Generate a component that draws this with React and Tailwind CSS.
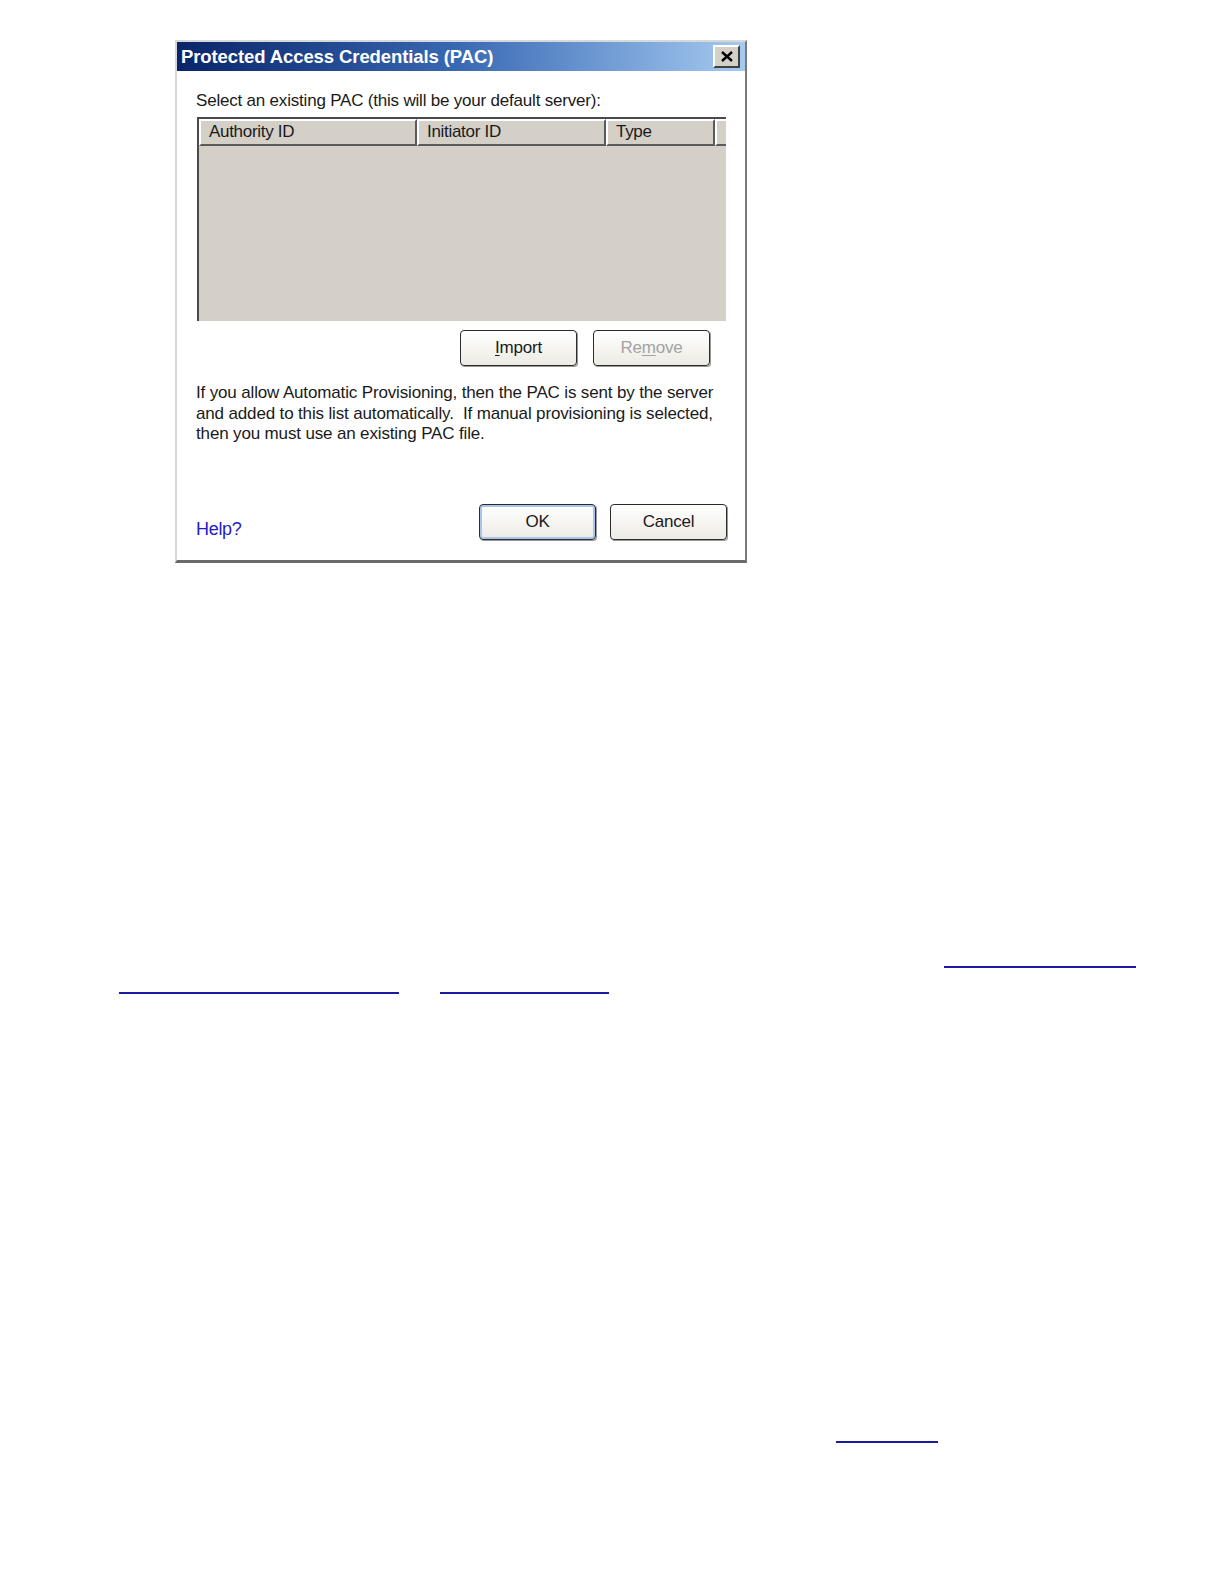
import React from 'react';

function WinButton({ children, disabled, isDefault, className = '' }) {
  return (
    <button
      type="button"
      className={`h-[36px] w-[117px] rounded-[4px] border border-[#2b2b2b] bg-gradient-to-b from-white to-[#ecebe4] text-[17px] tracking-[-0.2px] shadow-[1px_1px_0_#9a9a9a] flex items-center justify-center ${
        isDefault ? 'ring-2 ring-inset ring-[#a9c4ee]' : ''
      } ${disabled ? 'text-[#a3a3a3]' : 'text-[#1a1a1a]'} ${className}`}
    >
      {children}
    </button>
  );
}

function HeaderCell({ children, width }) {
  return (
    <div
      className={`${width} h-[27px] shrink-0 bg-[#d4d0c8] border-t-2 border-l-2 border-white border-r-2 border-r-[#5a5a5a] border-b-2 border-b-[#5a5a5a] pl-[8px] text-[17px] tracking-[-0.3px] leading-[22px] text-[#1a1a1a]`}
    >
      {children}
    </div>
  );
}

function PacDialog() {
  return (
    <div className="w-[572px] h-[523px] bg-white border-l-2 border-t-2 border-[#d8d8d8] border-r-2 border-r-[#7a7a7a] border-b-[3px] border-b-[#6a6a6a] flex flex-col">
      {/* Title bar */}
      <div className="h-[29px] bg-gradient-to-r from-[#0a246a] via-[#3a6ab4] to-[#a6caf0] flex items-center justify-between pl-[4px] pr-[5px]">
        <span className="text-white font-bold text-[18.5px] tracking-[-0.1px]">
          Protected Access Credentials (PAC)
        </span>
        <div className="w-[27px] h-[23px] bg-[#d4d0c8] border-t-2 border-l-2 border-white border-r-2 border-r-[#404040] border-b-2 border-b-[#404040] flex items-center justify-center">
          <svg width="12" height="11" viewBox="0 0 12 11">
            <path d="M1 1 L11 10 M11 1 L1 10" stroke="#000" strokeWidth="2.4" />
          </svg>
        </div>
      </div>

      {/* Body */}
      <div className="flex-1 flex flex-col pl-[19px] pr-[19px]">
        <p className="mt-[19px] text-[17px] leading-[22px] tracking-[-0.2px] text-[#1a1a1a] whitespace-nowrap">
          Select an existing PAC (this will be your default server):
        </p>

        <div className="mt-[5px] ml-[1px] w-[529px] h-[204px] bg-[#d4d0c8] border-l-2 border-t-2 border-[#4a4a4a]">
          <div className="flex">
            <HeaderCell width="w-[218px]">Authority ID</HeaderCell>
            <HeaderCell width="w-[189px]">Initiator ID</HeaderCell>
            <HeaderCell width="w-[109px]">Type</HeaderCell>
            <div className="flex-1 h-[27px] bg-[#d4d0c8] border-t-2 border-l-2 border-white border-b-2 border-b-[#5a5a5a]" />
          </div>
        </div>

        <div className="mt-[9px] flex gap-[16px] pl-[264px]">
          <WinButton>
            <span>
              <span className="underline underline-offset-2">I</span>mport
            </span>
          </WinButton>
          <WinButton disabled>
            <span>
              Re<span className="underline underline-offset-2">m</span>ove
            </span>
          </WinButton>
        </div>

        <p className="mt-[17px] text-[17px] leading-[20.5px] tracking-[-0.15px] text-[#1a1a1a] whitespace-pre">
          {'If you allow Automatic Provisioning, then the PAC is sent by the server\nand added to this list automatically.  If manual provisioning is selected,\nthen you must use an existing PAC file.'}
        </p>

        <div className="mt-auto mb-[20px] flex items-end justify-between">
          <span className="text-[18px] tracking-[-0.3px] text-[#1d1dc8] leading-[22px]">Help?</span>
          <div className="flex gap-[14px] mr-[-1px]">
            <WinButton isDefault>OK</WinButton>
            <WinButton>Cancel</WinButton>
          </div>
        </div>
      </div>
    </div>
  );
}

export default function App() {
  return (
    <div
      className="bg-white pb-[100px]"
      style={{ fontFamily: '"Liberation Sans", Arial, sans-serif' }}
    >
      <div className="pt-[40px] pl-[175px]">
        <PacDialog />
      </div>

      {/* link underlines of the page text below the figure */}
      <div className="mt-[403px]">
        <div className="ml-[944px] w-[192px] h-[2px] bg-[#1a1aa0]" />
        <div className="mt-[24px] flex">
          <div className="ml-[119px] w-[280px] h-[2px] bg-[#1a1aa0]" />
          <div className="ml-[41px] w-[169px] h-[2px] bg-[#1a1aa0]" />
        </div>
        <div className="mt-[447px] ml-[836px] w-[102px] h-[2px] bg-[#1a1aa0]" />
      </div>
    </div>
  );
}
